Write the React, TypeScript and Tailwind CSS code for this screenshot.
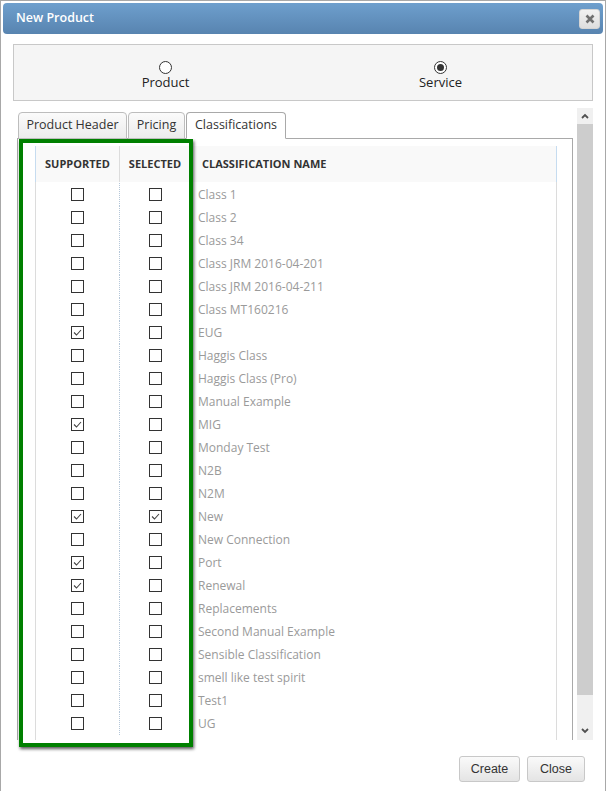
import React from "react";

type Row = { name: string; supported?: boolean; selected?: boolean };

const rows: Row[] = [
  { name: "Class 1" },
  { name: "Class 2" },
  { name: "Class 34" },
  { name: "Class JRM 2016-04-201" },
  { name: "Class JRM 2016-04-211" },
  { name: "Class MT160216" },
  { name: "EUG", supported: true },
  { name: "Haggis Class" },
  { name: "Haggis Class (Pro)" },
  { name: "Manual Example" },
  { name: "MIG", supported: true },
  { name: "Monday Test" },
  { name: "N2B" },
  { name: "N2M" },
  { name: "New", supported: true, selected: true },
  { name: "New Connection" },
  { name: "Port", supported: true },
  { name: "Renewal", supported: true },
  { name: "Replacements" },
  { name: "Second Manual Example" },
  { name: "Sensible Classification" },
  { name: "smell like test spirit" },
  { name: "Test1" },
  { name: "UG" },
];

const Checkbox = ({ checked }: { checked?: boolean }) => (
  <span className="w-[13px] h-[13px] border border-[#333] bg-white flex items-center justify-center">
    {checked && (
      <svg width="11" height="11" viewBox="0 0 11 11">
        <polyline
          points="2,5.5 4.5,8 9,3"
          fill="none"
          stroke="#444"
          strokeWidth="1.1"
        />
      </svg>
    )}
  </span>
);

const Radio = ({ checked }: { checked?: boolean }) => (
  <span className="w-[13px] h-[13px] rounded-full border border-[#333] bg-white flex items-center justify-center">
    {checked && <span className="w-[7px] h-[7px] rounded-full bg-[#333]" />}
  </span>
);

const Chevron = ({ up }: { up?: boolean }) => (
  <svg width="8" height="6" viewBox="0 0 8 6">
    <polyline
      points={up ? "1,5 4,2 7,5" : "1,1 4,4 7,1"}
      fill="none"
      stroke="#505050"
      strokeWidth="1.8"
    />
  </svg>
);

export default function App() {
  return (
    <div className="relative w-[606px] h-[791px] bg-white border border-b-0 border-[#a8a8a8] overflow-hidden font-['Open_Sans',sans-serif]">
      {/* title bar */}
      <div className="mx-[2px] mt-[2px] h-[31px] rounded-[4px] bg-gradient-to-b from-[#6e9fcd] to-[#5884b0] flex items-center justify-between pl-[13px] pr-[3px]">
        <span className="text-white text-[12.5px] font-semibold">New Product</span>
        <button className="w-[21px] h-[20px] rounded-[3px] border border-[#d4d4d4] bg-gradient-to-b from-[#f2f2f2] to-[#dedede] flex items-center justify-center">
          <svg width="10" height="10" viewBox="0 0 10 10">
            <path d="M1.5 1.5 L8.5 8.5 M8.5 1.5 L1.5 8.5" stroke="#707070" strokeWidth="2.6" />
          </svg>
        </button>
      </div>

      {/* type selector */}
      <div className="mt-[10px] mx-[12px] h-[57px] border border-[#c8c8c8] bg-[#f5f5f5] grid grid-cols-2 px-[14px]">
        <label className="flex flex-col items-center pt-[16px] text-[13px] text-[#222]">
          <Radio />
          <span className="leading-[16px]">Product</span>
        </label>
        <label className="flex flex-col items-center pt-[16px] text-[13px] text-[#222]">
          <Radio checked />
          <span className="leading-[16px]">Service</span>
        </label>
      </div>

      {/* scroll area */}
      <div className="mt-[7px] mx-[12px] h-[632px] flex">
        <div className="flex-1 overflow-hidden pt-[4px] px-[4px]">
          <div className="relative z-10 flex pl-[1px] text-[12.5px] text-[#333]">
            <div className="w-[109px] h-[27px] flex items-center justify-center border border-[#bdbdbd] rounded-t-[4px] bg-gradient-to-b from-[#fbfbfb] to-[#ececec]">
              Product Header
            </div>
            <div className="ml-[1px] w-[57px] h-[27px] flex items-center justify-center border border-[#bdbdbd] rounded-t-[4px] bg-gradient-to-b from-[#fbfbfb] to-[#ececec]">
              Pricing
            </div>
            <div className="ml-[1px] w-[100px] h-[27px] flex items-center justify-center border border-[#a9a9a9] border-b-white rounded-t-[4px] bg-white">
              Classifications
            </div>
          </div>
          <div className="-mt-px border border-[#a9a9a9] pt-[7px] pl-[17px] pr-[15px]">
            <div className="flex h-[36px] bg-[#f9f9f9] border-x border-[#c6dcf0] text-[11px] font-bold text-[#333] items-center">
              <div className="w-[83px] h-full flex items-center justify-center">SUPPORTED</div>
              <div className="w-[71px] h-full flex items-center justify-center border-l border-[#dcdcdc]">SELECTED</div>
              <div className="flex-1 pl-[12px]">CLASSIFICATION NAME</div>
            </div>
            <div className="border-x border-[#dcdcdc] pt-[1px] pb-[20px]">
              {rows.map((r) => (
                <div key={r.name} className="flex h-[23px] items-center">
                  <div className="w-[83px] h-full flex items-center justify-center">
                    <Checkbox checked={r.supported} />
                  </div>
                  <div className="w-[71px] h-full flex items-center justify-center border-l border-dotted border-[#b4c6d8]">
                    <Checkbox checked={r.selected} />
                  </div>
                  <div className="flex-1 pl-[8px] text-[12px] text-[#9a9a9a] whitespace-nowrap">{r.name}</div>
                </div>
              ))}
            </div>
          </div>
        </div>
        {/* scrollbar */}
        <div className="w-[16px] flex flex-col bg-[#f0f0f0]">
          <div className="h-[16px] flex items-center justify-center">
            <Chevron up />
          </div>
          <div className="h-[571px] bg-[#cdcdcd]" />
          <div className="flex-1 flex items-end justify-center pb-[6px]">
            <Chevron />
          </div>
        </div>
      </div>

      {/* buttons */}
      <div className="mt-[16px] flex justify-end gap-[7px] pr-[20px] font-['Liberation_Sans',Arial,sans-serif] text-[12.5px] text-[#333]">
        <button className="w-[61px] h-[26px] rounded-[3px] border border-[#c8c8c8] bg-gradient-to-b from-[#fafafa] to-[#e4e4e4]">
          Create
        </button>
        <button className="w-[58px] h-[26px] rounded-[3px] border border-[#c8c8c8] bg-gradient-to-b from-[#fafafa] to-[#e4e4e4]">
          Close
        </button>
      </div>

      {/* highlight */}
      <div className="absolute left-[18px] top-[138px] w-[174px] h-[608px] border-4 border-[#008000] shadow-[1px_2px_3px_rgba(0,0,0,0.65)] pointer-events-none" />
    </div>
  );
}
